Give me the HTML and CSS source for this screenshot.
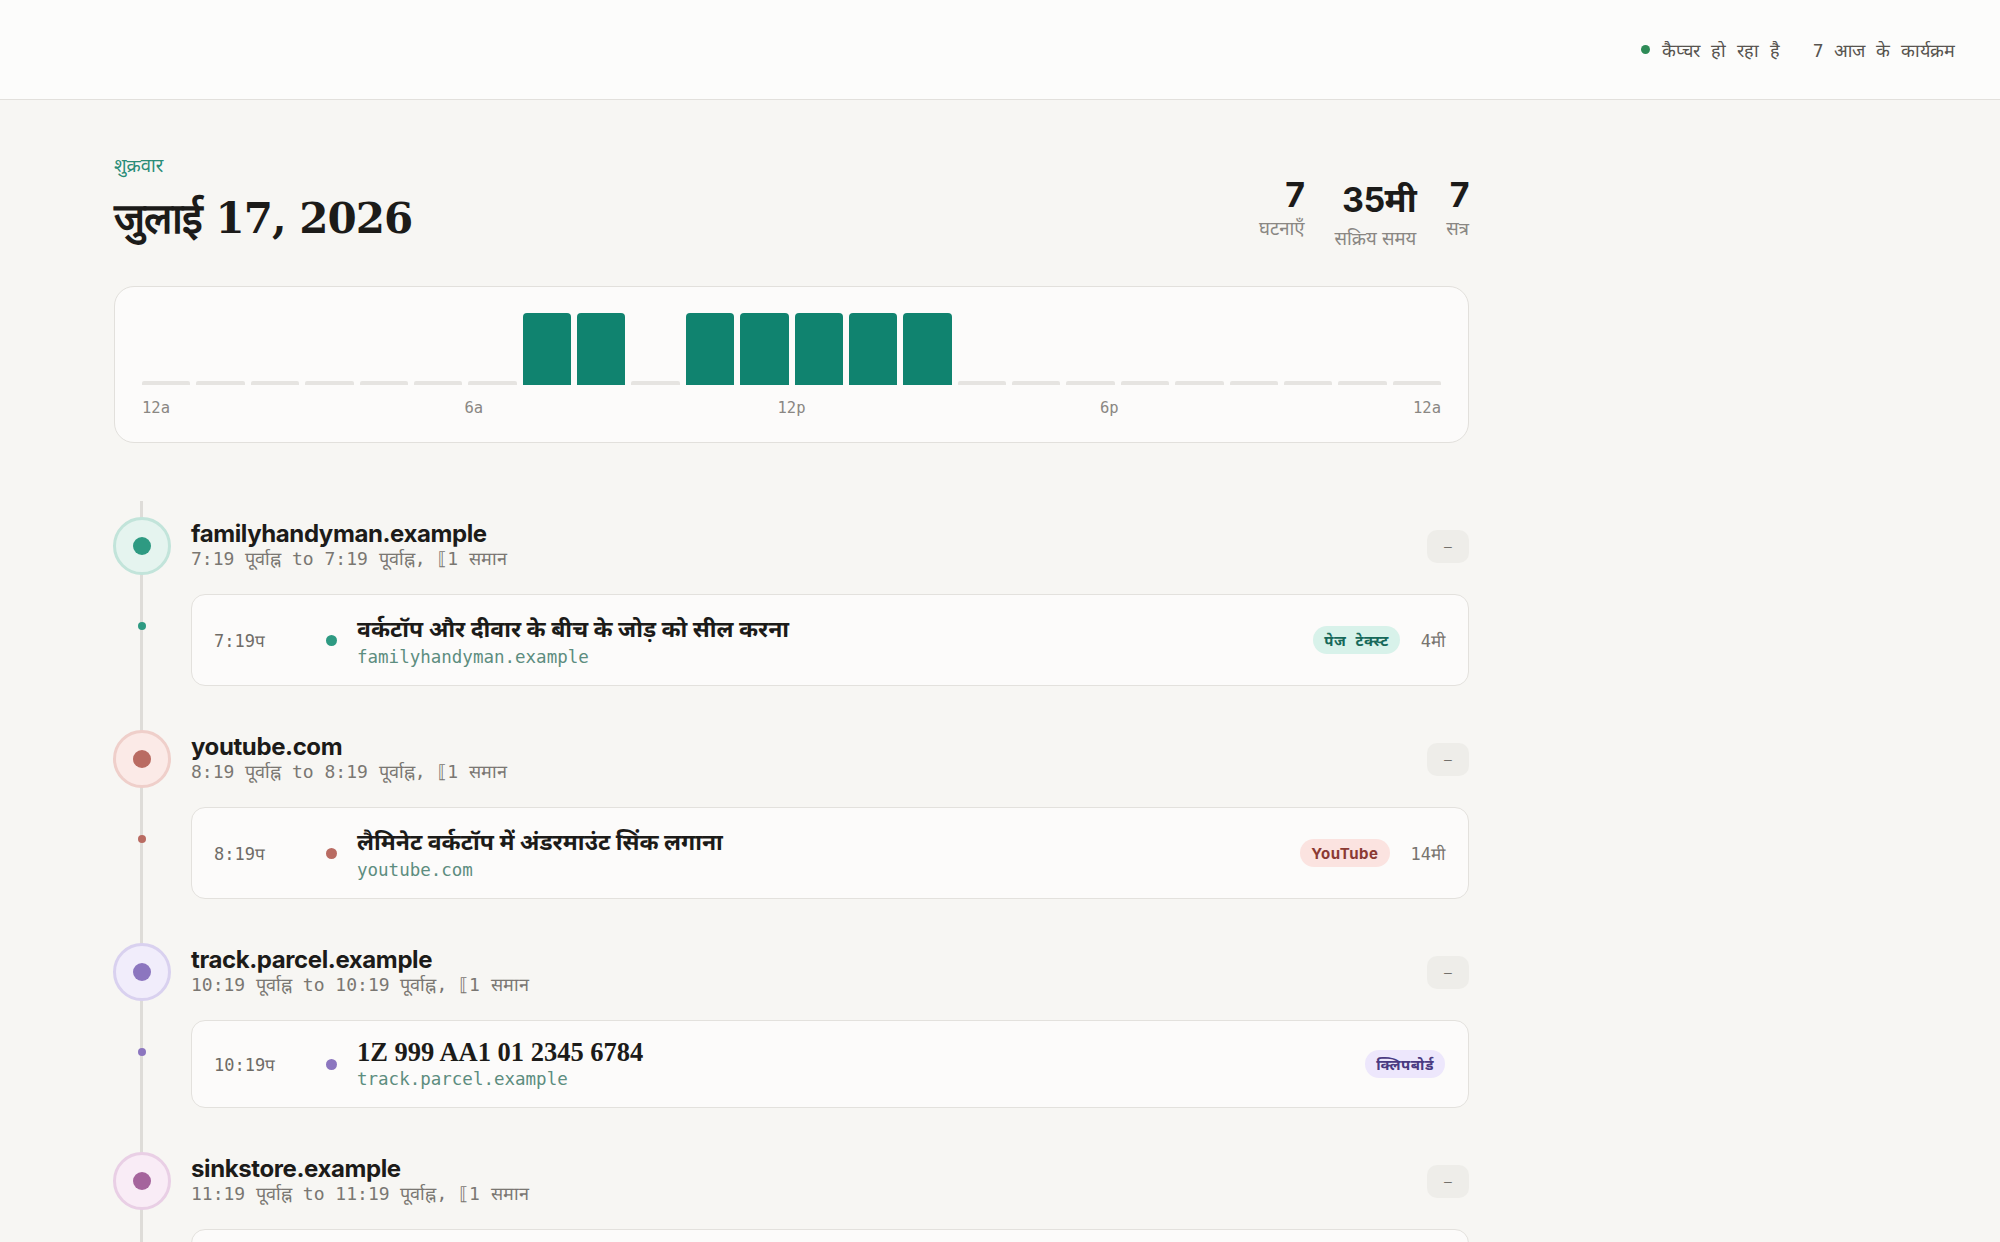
FILE: index.html
```html
<!DOCTYPE html>
<html lang="hi">
<head>
<meta charset="utf-8">
<title>दैनिक टाइमलाइन</title>
<link rel="stylesheet" href="styles.css">
</head>
<body>
<header class="topbar">
  <div class="status"><span class="live-dot"></span><span>कैप्चर हो रहा है</span></div>
  <div class="count">7 आज के कार्यक्रम</div>
</header>

<main class="page">
  <section class="day-head">
    <div class="day-title">
      <div class="weekday">शुक्रवार</div>
      <h1 class="date">जुलाई 17, 2026</h1>
    </div>
    <div class="stats">
      <div class="stat"><div class="stat-num">7</div><div class="stat-label">घटनाएँ</div></div>
      <div class="stat"><div class="stat-num stat-num-mixed">35मी</div><div class="stat-label">सक्रिय समय</div></div>
      <div class="stat"><div class="stat-num">7</div><div class="stat-label">सत्र</div></div>
    </div>
  </section>

  <section class="chart-card">
    <div class="bars">
      <span class="bar"></span><span class="bar"></span><span class="bar"></span><span class="bar"></span>
      <span class="bar"></span><span class="bar"></span><span class="bar"></span><span class="bar on"></span>
      <span class="bar on"></span><span class="bar"></span><span class="bar on"></span><span class="bar on"></span>
      <span class="bar on"></span><span class="bar on"></span><span class="bar on"></span><span class="bar"></span>
      <span class="bar"></span><span class="bar"></span><span class="bar"></span><span class="bar"></span>
      <span class="bar"></span><span class="bar"></span><span class="bar"></span><span class="bar"></span>
    </div>
    <div class="axis">
      <span>12a</span><span>6a</span><span>12p</span><span>6p</span><span>12a</span>
    </div>
  </section>

  <section class="timeline">
    <div class="group teal">
      <div class="group-head">
        <div class="node"><span class="node-dot"></span></div>
        <div class="group-info">
          <div class="group-title">familyhandyman.example</div>
          <div class="group-meta">7:19 पूर्वाह्न to 7:19 पूर्वाह्न, ⟦1 समान</div>
        </div>
        <button class="collapse">–</button>
      </div>
      <div class="event">
        <span class="tl-dot"></span>
        <div class="event-card">
          <span class="ev-time">7:19प</span>
          <span class="ev-dot"></span>
          <div class="ev-body">
            <div class="ev-title">वर्कटॉप और दीवार के बीच के जोड़ को सील करना</div>
            <div class="ev-domain">familyhandyman.example</div>
          </div>
          <span class="badge badge-teal">पेज टेक्स्ट</span>
          <span class="ev-dur">4मी</span>
        </div>
      </div>
    </div>

    <div class="group red">
      <div class="group-head">
        <div class="node"><span class="node-dot"></span></div>
        <div class="group-info">
          <div class="group-title">youtube.com</div>
          <div class="group-meta">8:19 पूर्वाह्न to 8:19 पूर्वाह्न, ⟦1 समान</div>
        </div>
        <button class="collapse">–</button>
      </div>
      <div class="event">
        <span class="tl-dot"></span>
        <div class="event-card">
          <span class="ev-time">8:19प</span>
          <span class="ev-dot"></span>
          <div class="ev-body">
            <div class="ev-title">लैमिनेट वर्कटॉप में अंडरमाउंट सिंक लगाना</div>
            <div class="ev-domain">youtube.com</div>
          </div>
          <span class="badge badge-red">YouTube</span>
          <span class="ev-dur">14मी</span>
        </div>
      </div>
    </div>

    <div class="group purple">
      <div class="group-head">
        <div class="node"><span class="node-dot"></span></div>
        <div class="group-info">
          <div class="group-title">track.parcel.example</div>
          <div class="group-meta">10:19 पूर्वाह्न to 10:19 पूर्वाह्न, ⟦1 समान</div>
        </div>
        <button class="collapse">–</button>
      </div>
      <div class="event">
        <span class="tl-dot"></span>
        <div class="event-card">
          <span class="ev-time">10:19प</span>
          <span class="ev-dot"></span>
          <div class="ev-body">
            <div class="ev-title serif">1Z 999 AA1 01 2345 6784</div>
            <div class="ev-domain">track.parcel.example</div>
          </div>
          <span class="badge badge-purple">क्लिपबोर्ड</span>
        </div>
      </div>
    </div>

    <div class="group pink">
      <div class="group-head">
        <div class="node"><span class="node-dot"></span></div>
        <div class="group-info">
          <div class="group-title">sinkstore.example</div>
          <div class="group-meta">11:19 पूर्वाह्न to 11:19 पूर्वाह्न, ⟦1 समान</div>
        </div>
        <button class="collapse">–</button>
      </div>
      <div class="event">
        <span class="tl-dot"></span>
        <div class="event-card">
          <span class="ev-time">11:19प</span>
          <span class="ev-dot"></span>
          <div class="ev-body">
            <div class="ev-title">स्टेनलेस स्टील अंडरमाउंट सिंक</div>
            <div class="ev-domain">sinkstore.example</div>
          </div>
          <span class="badge badge-teal">पेज टेक्स्ट</span>
          <span class="ev-dur">6मी</span>
        </div>
      </div>
    </div>
  </section>
</main>
</body>
</html>
```
FILE: styles.css
```css
* { box-sizing: border-box; }

body {
  margin: 0;
  background: #f7f6f3;
  color: #1c1b19;
  font-family: Inter, "Noto Sans", sans-serif;
}

/* top bar */
.topbar {
  height: 100px;
  background: #fcfcfb;
  border-bottom: 1px solid #e2e0dc;
  display: flex;
  justify-content: flex-end;
  align-items: center;
  gap: 33px;
  padding-right: 45px;
  font-family: "DejaVu Sans Mono", monospace;
  font-size: 18px;
  color: #57544f;
}
.status { display: flex; align-items: center; gap: 12px; }
.live-dot { width: 9px; height: 9px; border-radius: 50%; background: #2e8b57; }

/* page */
.page {
  width: 1355px;
  margin-left: 114px;
  padding-top: 54px;
  padding-bottom: 80px;
}

.day-head {
  display: flex;
  justify-content: space-between;
  align-items: flex-start;
}
.weekday {
  font-size: 18.5px;
  line-height: 22px;
  color: #2a8c77;
}
.date {
  margin: 15px 0 0;
  font-family: "DejaVu Serif", serif;
  font-weight: 700;
  font-size: 42px;
  line-height: 56px;
  letter-spacing: -1px;
}

.stats {
  display: flex;
  gap: 30px;
  margin-top: 20px;
  align-items: flex-start;
}
.stat { text-align: right; }
.stat-num {
  font-size: 34px;
  font-weight: 700;
  line-height: 42px;
  letter-spacing: -0.5px;
}
.stat-num-mixed {
  padding: 5px 0;
}
.stat-label {
  font-size: 18.5px;
  line-height: 24px;
  color: #8a8783;
}

/* chart */
.chart-card {
  margin-top: 36px;
  background: #fcfbfa;
  border: 1.5px solid #e2e0dc;
  border-radius: 20px;
  padding: 26px 27px 25px;
}
.bars {
  height: 72px;
  display: flex;
  align-items: flex-end;
  gap: 6px;
}
.bar {
  flex: 1;
  height: 4px;
  background: #e6e4e1;
  border-radius: 2px 2px 0 0;
}
.bar.on {
  height: 72px;
  background: #10836f;
  border-radius: 4px 4px 0 0;
}
.axis {
  margin-top: 14px;
  display: flex;
  justify-content: space-between;
  font-family: "DejaVu Sans Mono", monospace;
  font-size: 15.5px;
  line-height: 18px;
  color: #8a8783;
}

/* timeline */
.timeline {
  position: relative;
  margin-top: 58px;
  padding-top: 16px;
}
.timeline::before {
  content: "";
  position: absolute;
  left: 26px;
  top: 0;
  bottom: 0;
  width: 3px;
  background: #dedcd8;
}

.group { position: relative; margin-bottom: 44px; }

.group-head {
  display: flex;
  align-items: center;
  gap: 20px;
  height: 58px;
}
.node {
  flex: none;
  width: 58px;
  height: 58px;
  margin-left: -1px;
  border-radius: 50%;
  border: 3px solid var(--ring);
  background: var(--fill);
  display: flex;
  align-items: center;
  justify-content: center;
}
.node-dot {
  width: 18px;
  height: 18px;
  border-radius: 50%;
  background: var(--dot);
}
.group-info { flex: 1; }
.group-title {
  font-size: 24px;
  font-weight: 700;
  line-height: 26px;
  letter-spacing: -0.4px;
  color: #1c1b19;
}
.group-meta {
  font-family: "DejaVu Sans Mono", monospace;
  font-size: 18px;
  line-height: 24px;
  color: #7a7772;
}
.collapse {
  flex: none;
  width: 42px;
  height: 33px;
  border: none;
  border-radius: 10px;
  background: #eeede9;
  color: #6b6863;
  font-family: "DejaVu Sans Mono", monospace;
  font-size: 13px;
  padding: 0;
}

.event {
  position: relative;
  margin-top: 19px;
  padding-left: 77px;
}
.tl-dot {
  position: absolute;
  left: 23.5px;
  top: 28px;
  width: 8px;
  height: 8px;
  border-radius: 50%;
  background: var(--dot);
}
.event-card {
  display: flex;
  align-items: center;
  background: #fcfbfa;
  border: 1.5px solid #e3e1dd;
  border-radius: 14px;
  padding: 17px 23px 17px 22px;
}
.ev-time {
  flex: none;
  width: 96px;
  font-family: "DejaVu Sans Mono", monospace;
  font-size: 17px;
  color: #6f6c67;
}
.ev-dot {
  flex: none;
  width: 11px;
  height: 11px;
  border-radius: 50%;
  margin: 0 20px 0 16px;
  background: var(--dot);
}
.ev-body { flex: 1; min-width: 0; }
.ev-title {
  font-size: 23px;
  font-weight: 700;
  line-height: normal;
  color: #1c1b19;
}
.ev-title.serif {
  font-family: "Liberation Serif", serif;
  font-size: 26.5px;
  line-height: 28px;
}
.ev-domain {
  margin-top: 2px;
  font-family: "DejaVu Sans Mono", monospace;
  font-size: 17.5px;
  line-height: 22px;
  color: #5d8d7f;
}
.badge {
  flex: none;
  height: 28px;
  padding: 0 11px;
  border-radius: 14px;
  display: flex;
  align-items: center;
  font-size: 15px;
  font-weight: 700;
  letter-spacing: 0.5px;
  word-spacing: 5px;
}
.badge-teal { background: #d8f2ea; color: #17695a; }
.badge-red { background: #fbe3e0; color: #8b3a33; }
.badge-purple { background: #ede7fc; color: #4a3b82; }
.ev-dur {
  flex: none;
  margin-left: 21px;
  font-family: "DejaVu Sans Mono", monospace;
  font-size: 17px;
  color: #77746f;
}

/* group palettes */
.teal { --ring: #c2e4da; --fill: #e5f4ef; --dot: #2e9a82; }
.red { --ring: #efcfca; --fill: #fbeae7; --dot: #b96b62; }
.purple { --ring: #d9d1ef; --fill: #f1edfb; --dot: #8c76bf; }
.pink { --ring: #e9cfe5; --fill: #f9ecf6; --dot: #a5649c; }
```
